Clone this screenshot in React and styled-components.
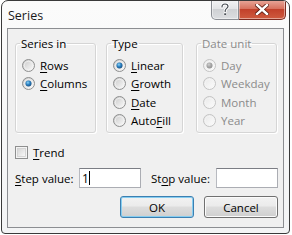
import React from "react";
import styled, { createGlobalStyle } from "styled-components";

const Global = createGlobalStyle`
  html, body { margin: 0; padding: 0; background: #ffffff; }
  body { font-family: "Open Sans", "Noto Sans", sans-serif; font-size: 11px; color: #000; }
`;

const Window = styled.div`
  box-sizing: border-box;
  margin-left: 1px;
  width: 289px;
  height: 234px;
  border: 1px solid #3a3a3a;
  border-radius: 7px 7px 4px 4px;
  background: linear-gradient(#fbfbfb, #f3f4f5);
  display: flex;
  flex-direction: column;
  overflow: hidden;
`;

const TitleBar = styled.div`
  height: 27px;
  display: flex;
  justify-content: space-between;
  align-items: flex-start;
  flex-shrink: 0;
`;

const Title = styled.div`
  padding: 6px 0 0 6px;
  font-size: 12.5px;
  color: #1a1a1a;
`;

const Controls = styled.div`
  display: flex;
  margin-right: 3px;
  margin-top: -1px;
`;

const CapButton = styled.div`
  box-sizing: border-box;
  height: 20px;
  width: ${(p) => p.$w}px;
  display: flex;
  align-items: center;
  justify-content: center;
  border: 1px solid ${(p) => (p.$close ? "#7d2b20" : "#8a8d93")};
  border-top: none;
  border-left: ${(p) => (p.$close ? "none" : "")};
  border-radius: ${(p) => (p.$close ? "0 0 5px 0" : "0 0 0 5px")};
  background: ${(p) =>
    p.$close
      ? "linear-gradient(#e9a99c 0%, #d8725f 45%, #c2412b 50%, #cf5a3f 100%)"
      : "linear-gradient(#f4f4f5 0%, #e3e4e6 45%, #cfd1d4 50%, #dcdee1 100%)"};
  box-shadow: inset 0 0 0 1px rgba(255, 255, 255, 0.45);
`;

const Client = styled.div`
  box-sizing: border-box;
  margin: 0 5px 0 5px;
  height: 200px;
  border: 1px solid #8c8e92;
  background: #f0f0f0;
  padding: 7px 0 0 7px;
  display: flex;
  flex-direction: column;
`;

const Groups = styled.div`
  display: flex;
  align-items: flex-start;
`;

const Group = styled.fieldset`
  box-sizing: border-box;
  margin: 0 ${(p) => p.$gap}px 0 0;
  width: ${(p) => p.$w}px;
  height: 97px;
  padding: 5px 0 0 6px;
  border: 1px solid #d5d5d5;
  border-radius: 3px;
  box-shadow: inset 1px 1px 0 #ffffff, 1px 1px 0 #ffffff;
  display: flex;
  flex-direction: column;
`;

const Legend = styled.legend`
  padding: 0 1px;
  margin-left: -2px;
  font-size: 11.5px;
  color: ${(p) => (p.$disabled ? "#8b8b8b" : "#000")};
`;

const OptionRow = styled.label`
  display: flex;
  align-items: center;
  gap: 5px;
  height: 18.5px;
  font-size: 11.5px;
  color: ${(p) => (p.$disabled ? "#8b8b8b" : "#000")};
`;

const U = styled.span`
  text-decoration: underline;
  text-underline-offset: 2px;
`;

const TrendRow = styled.label`
  display: flex;
  align-items: center;
  gap: 5px;
  margin-top: 12px;
  height: 14px;
  font-size: 11.5px;
`;

const FieldRow = styled.div`
  display: flex;
  align-items: center;
  margin-top: 9px;
  height: 20px;
  font-size: 11.5px;
`;

const FieldLabel = styled.span`
  width: ${(p) => p.$w}px;
`;

const Input = styled.div`
  box-sizing: border-box;
  width: 62px;
  height: 20px;
  margin-right: ${(p) => p.$mr}px;
  background: #fff;
  border: 1px solid #abadb3;
  border-top-color: #7b7d84;
  border-left-color: #b8bac0;
  display: flex;
  align-items: center;
  padding-left: 2px;
  font-size: 12px;
`;

const Caret = styled.span`
  display: inline-block;
  width: 1px;
  height: 14px;
  background: #000;
`;

const ButtonRow = styled.div`
  display: flex;
  justify-content: flex-end;
  gap: 10px;
  margin-top: 8px;
  padding-right: 5px;
`;

const Button = styled.div`
  box-sizing: border-box;
  width: 74px;
  height: 22px;
  display: flex;
  align-items: center;
  justify-content: center;
  font-size: 11.5px;
  border-radius: 3px;
  border: 1px solid ${(p) => (p.$default ? "#3c7fb1" : "#707070")};
  background: linear-gradient(#f2f2f2 0%, #ebebeb 45%, #dddddd 50%, #cfcfcf 100%);
  box-shadow: inset 0 0 0 1px ${(p) => (p.$default ? "#86cdf0" : "#fbfbfb")};
`;

function Radio({ checked, disabled }) {
  const id = `r${checked ? 1 : 0}${disabled ? 1 : 0}`;
  return (
    <svg width="13" height="13" viewBox="0 0 13 13">
      <defs>
        <linearGradient id={`${id}bg`} x1="0" y1="0" x2="1" y2="1">
          <stop offset="0" stopColor={disabled ? "#e6e6e6" : "#c6c6c6"} />
          <stop offset="1" stopColor="#ffffff" />
        </linearGradient>
        <radialGradient id={`${id}dot`} cx="0.4" cy="0.35" r="0.7">
          <stop offset="0" stopColor={disabled ? "#d0d0d0" : "#8bd3f7"} />
          <stop offset="0.5" stopColor={disabled ? "#a8a8a8" : "#2a7fc0"} />
          <stop offset="1" stopColor={disabled ? "#8f8f8f" : "#1a4f80"} />
        </radialGradient>
      </defs>
      <circle cx="6.5" cy="6.5" r="6" fill={`url(#${id}bg)`} stroke={disabled ? "#c3c3c3" : "#8e8f8f"} strokeWidth="1" />
      <circle cx="6.5" cy="6.5" r="4.2" fill="none" stroke={disabled ? "#f4f4f4" : "#f2f2f2"} strokeWidth="0.8" />
      {checked && <circle cx="6.5" cy="6.5" r="3" fill={`url(#${id}dot)`} />}
    </svg>
  );
}

function Checkbox() {
  return (
    <svg width="13" height="13" viewBox="0 0 13 13">
      <defs>
        <linearGradient id="cbg" x1="0" y1="0" x2="1" y2="1">
          <stop offset="0" stopColor="#d4d4d4" />
          <stop offset="1" stopColor="#fafafa" />
        </linearGradient>
      </defs>
      <rect x="0.5" y="0.5" width="12" height="12" fill="#f4f4f4" stroke="#8e8f8f" />
      <rect x="2.5" y="2.5" width="8" height="8" fill="url(#cbg)" stroke="#cfcfcf" strokeWidth="0.8" />
    </svg>
  );
}

function HelpGlyph() {
  return (
    <svg width="10" height="13" viewBox="0 0 10 13">
      <path
        d="M2 4 C2 1.6 3.6 1 5 1 C6.6 1 8 2 8 3.6 C8 5.3 5.2 5.6 5.2 7.8 L5.2 8.6"
        fill="none"
        stroke="#ffffff"
        strokeWidth="3"
        strokeLinecap="round"
      />
      <path
        d="M2 4 C2 1.6 3.6 1 5 1 C6.6 1 8 2 8 3.6 C8 5.3 5.2 5.6 5.2 7.8 L5.2 8.6"
        fill="none"
        stroke="#4b5057"
        strokeWidth="1.2"
        strokeLinecap="round"
      />
      <rect x="3.9" y="10" width="2.6" height="2.4" fill="#4b5057" stroke="#ffffff" strokeWidth="0.6" />
    </svg>
  );
}

function CloseGlyph() {
  return (
    <svg width="14" height="11" viewBox="0 0 14 11">
      <path d="M2 1 L12 10 M12 1 L2 10" stroke="#5a1a10" strokeWidth="4" strokeLinecap="square" />
      <path d="M2 1 L12 10 M12 1 L2 10" stroke="#ffffff" strokeWidth="2.4" strokeLinecap="square" />
    </svg>
  );
}

export default function App() {
  return (
    <>
      <Global />
      <Window>
        <TitleBar>
          <Title>Series</Title>
          <Controls>
            <CapButton $w={28}>
              <HelpGlyph />
            </CapButton>
            <CapButton $w={47} $close>
              <CloseGlyph />
            </CapButton>
          </Controls>
        </TitleBar>
        <Client>
          <Groups>
            <Group $w={81} $gap={10}>
              <Legend>Series in</Legend>
              <OptionRow>
                <Radio />
                <span><U>R</U>ows</span>
              </OptionRow>
              <OptionRow>
                <Radio checked />
                <span><U>C</U>olumns</span>
              </OptionRow>
            </Group>
            <Group $w={77} $gap={13}>
              <Legend>Type</Legend>
              <OptionRow>
                <Radio checked />
                <span><U>L</U>inear</span>
              </OptionRow>
              <OptionRow>
                <Radio />
                <span><U>G</U>rowth</span>
              </OptionRow>
              <OptionRow>
                <Radio />
                <span><U>D</U>ate</span>
              </OptionRow>
              <OptionRow>
                <Radio />
                <span>Auto<U>F</U>ill</span>
              </OptionRow>
            </Group>
            <Group $w={81} $gap={0}>
              <Legend $disabled>Date unit</Legend>
              <OptionRow $disabled>
                <Radio checked disabled />
                <span>Day</span>
              </OptionRow>
              <OptionRow $disabled>
                <Radio disabled />
                <span>Weekday</span>
              </OptionRow>
              <OptionRow $disabled>
                <Radio disabled />
                <span>Month</span>
              </OptionRow>
              <OptionRow $disabled>
                <Radio disabled />
                <span>Year</span>
              </OptionRow>
            </Group>
          </Groups>
          <TrendRow>
            <Checkbox />
            <span><U>T</U>rend</span>
          </TrendRow>
          <FieldRow>
            <FieldLabel $w={64}><U>S</U>tep value:</FieldLabel>
            <Input $mr={10}>
              1<Caret />
            </Input>
            <FieldLabel $w={65}>St<U>o</U>p value:</FieldLabel>
            <Input $mr={0} />
          </FieldRow>
          <ButtonRow>
            <Button $default>OK</Button>
            <Button>Cancel</Button>
          </ButtonRow>
        </Client>
      </Window>
    </>
  );
}
